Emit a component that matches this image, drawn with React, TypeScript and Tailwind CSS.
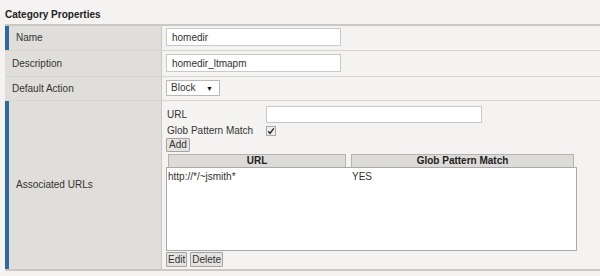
export default function App() {
  const font = { fontFamily: '"Liberation Sans", Arial, sans-serif' }
  return (
    <div className="w-[600px] h-[276px] bg-[#f4f3f1] text-[10px] text-[#333] leading-none" style={font}>
      <div className="pl-[5px] pt-[6px] h-[24px] flex items-center font-bold text-[10px] text-[#222]">Category Properties</div>

      <div className="ml-[5px] border-t-2 border-b-2 border-[#c9c8c5]">
        {/* Name */}
        <div className="flex h-[25px] border-b border-[#d6d5d2]">
          <div className="w-[157px] flex bg-[#dfdedb] border-r border-[#c9c8c5]">
            <div className="w-[4px] bg-[#2e6a9f]" />
            <div className="pl-[7px] flex items-center">Name</div>
          </div>
          <div className="flex-1 pl-[4px] pt-[2px]">
            <input
              readOnly
              value="homedir"
              className="w-[175px] h-[18px] bg-white border border-[#c9c9c9] px-[5px] text-[10px] text-[#333] outline-none"
              style={font}
            />
          </div>
        </div>

        {/* Description */}
        <div className="flex h-[26px] border-b border-[#d6d5d2]">
          <div className="w-[157px] flex items-center pl-[7px] bg-[#dfdedb] border-r border-[#c9c8c5]">Description</div>
          <div className="flex-1 pl-[4px] pt-[3px]">
            <input
              readOnly
              value="homedir_ltmapm"
              className="w-[175px] h-[18px] bg-white border border-[#c9c9c9] px-[5px] text-[10px] text-[#333] outline-none"
              style={font}
            />
          </div>
        </div>

        {/* Default Action */}
        <div className="flex h-[24px] border-b border-[#d6d5d2]">
          <div className="w-[157px] flex items-center pl-[7px] bg-[#dfdedb] border-r border-[#c9c8c5]">Default Action</div>
          <div className="flex-1 pl-[4px] pt-[3px]">
            <div className="w-[54px] h-[16px] bg-white border border-[#b9b9b9] flex items-center justify-between pl-[4px] pr-[6px]">
              <span>Block</span>
              <span className="text-[7px] text-[#111]">▼</span>
            </div>
          </div>
        </div>

        {/* Associated URLs */}
        <div className="flex h-[168px]">
          <div className="w-[157px] flex bg-[#dfdedb] border-r border-[#c9c8c5]">
            <div className="w-[4px] bg-[#2e6a9f]" />
            <div className="pl-[7px] flex items-center">Associated URLs</div>
          </div>
          <div className="flex-1 pl-[4px] pt-[5px] flex flex-col">
            <div className="flex items-center h-[17px]">
              <span className="w-[100px] pl-[1px]">URL</span>
              <div className="w-[216px] h-[17px] bg-white border border-[#c9c9c9]" />
            </div>
            <div className="flex items-center h-[15px]">
              <span className="w-[100px] pl-[1px] whitespace-nowrap">Glob Pattern Match</span>
              <div className="w-[10px] h-[10px] bg-[#ededed] border border-[#a9a9a9] flex items-center justify-center">
                <svg width="8" height="8" viewBox="0 0 8 8">
                  <path d="M1.2 4.2 L3.1 6.3 L6.8 1.4" stroke="#333" strokeWidth="1.5" fill="none" />
                </svg>
              </div>
            </div>
            <div>
              <div className="inline-flex items-center h-[14px] px-[2px] bg-[#e4e3e0] border border-[#a3a3a3] rounded-[1px]">Add</div>
            </div>
            <div className="w-[411px] mt-[2px]">
              <div className="flex pl-[2px] pr-[3px] gap-[5px]">
                <div className="w-[178px] h-[13px] bg-[#dcdbd7] border border-[#b3b3b3] border-b-0 flex items-center justify-center font-bold text-[#222]">URL</div>
                <div className="w-[223px] h-[13px] bg-[#dcdbd7] border border-[#b3b3b3] border-b-0 flex items-center justify-center font-bold text-[#222]">Glob Pattern Match</div>
              </div>
              <div className="h-[84px] bg-white border border-[#a9a9a9] pt-[4px]">
                <div className="flex">
                  <span className="w-[185px] pl-[1px]">http://*/~jsmith*</span>
                  <span>YES</span>
                </div>
              </div>
            </div>
            <div className="flex gap-[3px] mt-[1px]">
              <div className="inline-flex items-center h-[15px] px-[1px] bg-[#e4e3e0] border border-[#a3a3a3] rounded-[1px]">Edit</div>
              <div className="inline-flex items-center h-[15px] px-[1px] bg-[#e4e3e0] border border-[#a3a3a3] rounded-[1px]">Delete</div>
            </div>
          </div>
        </div>
      </div>
    </div>
  )
}
